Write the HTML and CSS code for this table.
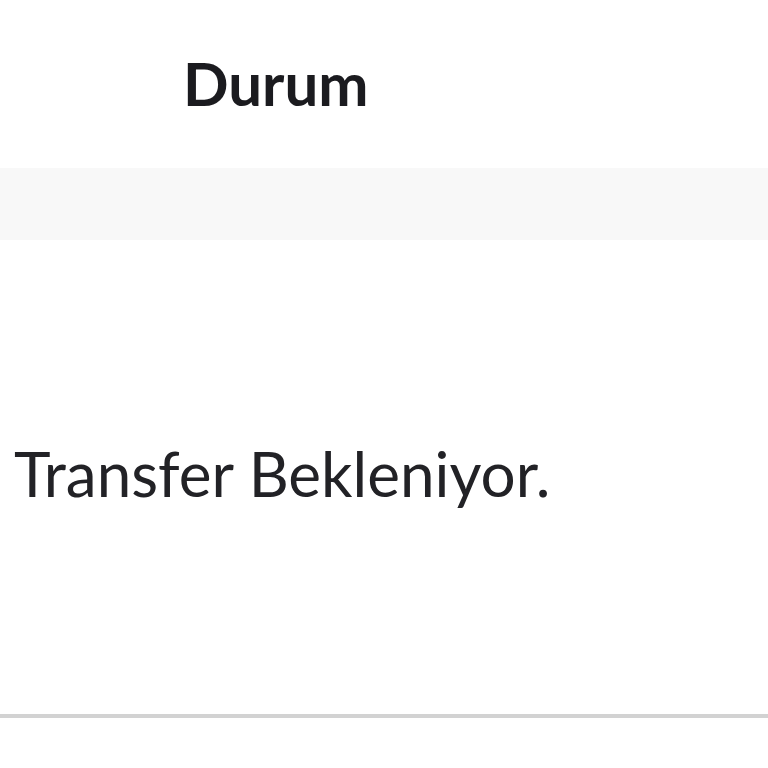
FILE: index.html
```html
<!DOCTYPE html>
<html lang="tr">
<head>
<meta charset="utf-8">
<link rel="stylesheet" href="styles.css">
</head>
<body>
<div class="table">
  <div class="head-row"><span class="head-cell">Durum</span></div>
  <div class="band"></div>
  <div class="body-row"><span class="body-cell">Transfer Bekleniyor.</span></div>
</div>
</body>
</html>
```
FILE: styles.css
```css
html, body { margin: 0; padding: 0; background: #ffffff; }
.table { width: 768px; font-family: Lato, "Noto Sans", sans-serif; color: #1b1b1f; }
.head-row { height: 168px; display: flex; align-items: center; padding-left: 183px; padding-bottom: 2px; box-sizing: border-box; }
.head-cell { font-size: 60px; font-weight: 700; line-height: 1; }
.band { height: 72px; background: #f8f8f8; }
.body-row { height: 478px; display: flex; align-items: center; padding-left: 14px; padding-bottom: 8px; box-sizing: border-box; border-bottom: 4px solid #d2d2d2; }
.body-cell { font-size: 62px; font-weight: 400; line-height: 1; color: #222226; }
```
